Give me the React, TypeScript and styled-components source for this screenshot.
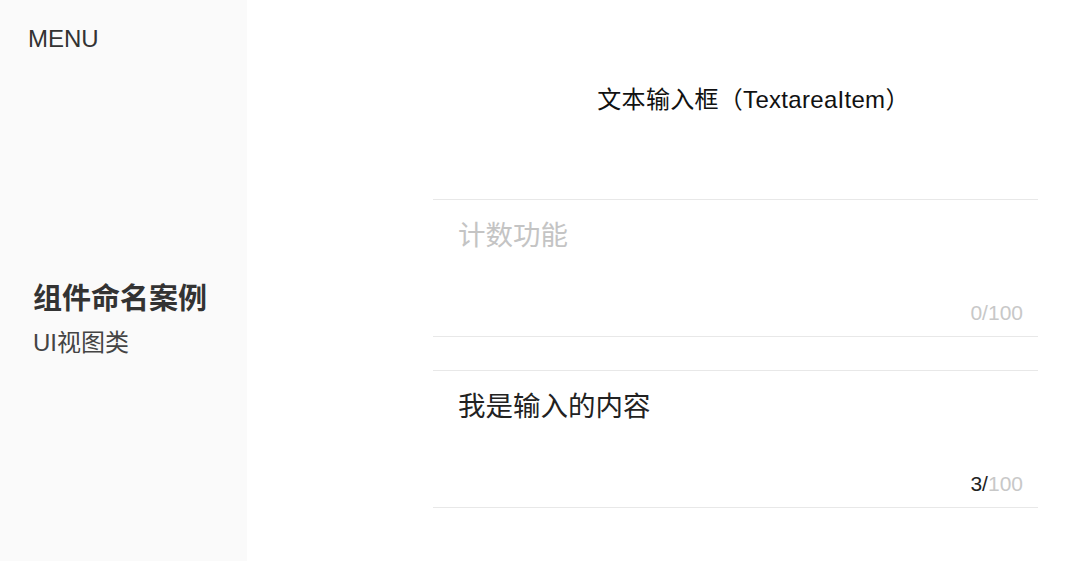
import React from 'react';
import styled, { createGlobalStyle } from 'styled-components';

const GlobalStyle = createGlobalStyle`
  html, body {
    margin: 0;
    padding: 0;
    background: #ffffff;
  }
  body {
    font-family: "Liberation Sans", "Noto Sans CJK SC", sans-serif;
    color: #222;
  }
`;

const Page = styled.div`
  display: flex;
  width: 1080px;
  height: 561px;
  overflow: hidden;
`;

const Sidebar = styled.aside`
  width: 247px;
  flex-shrink: 0;
  background: #fafafa;
  padding: 25px 0 0 28px;
  box-sizing: border-box;
  display: flex;
  flex-direction: column;
`;

const MenuLabel = styled.div`
  font-size: 24px;
  line-height: 28px;
  font-weight: 500;
  color: #333;
`;

const Group = styled.div`
  margin-top: 226px;
  padding-left: 5px;
`;

const GroupTitle = styled.div`
  font-size: 29px;
  line-height: 40px;
  font-weight: 700;
  color: #333;
`;

const GroupSub = styled.div`
  margin-top: 7px;
  font-size: 24px;
  line-height: 34px;
  color: #444;
`;

const Main = styled.main`
  flex: 1;
  padding: 84px 42px 0 186px;
  display: flex;
  flex-direction: column;
`;

const Title = styled.h1`
  margin: 0 0 83px;
  padding-left: 36px;
  text-align: center;
  font-size: 24px;
  line-height: 32px;
  font-weight: 400;
  letter-spacing: 0.3px;
  color: #111;
`;

const List = styled.div`
  display: flex;
  flex-direction: column;
  gap: 33px;
`;

const Item = styled.div`
  height: 138px;
  box-sizing: border-box;
  border-top: 1px solid #e8e8e8;
  border-bottom: 1px solid #e8e8e8;
  padding: 17px 15px 11px 25px;
  display: flex;
  flex-direction: column;
`;

const Area = styled.textarea`
  flex: 1;
  border: none;
  outline: none;
  resize: none;
  padding: 0;
  margin: 0;
  background: transparent;
  font-family: inherit;
  font-size: 27.5px;
  line-height: 38px;
  color: #222;
  overflow: hidden;

  &::placeholder {
    color: #c4c4c4;
  }
`;

const Counter = styled.div`
  align-self: flex-end;
  font-size: 21px;
  line-height: 24px;
  color: #c8c8c8;
`;

const Count = styled.span<{ $filled: boolean }>`
  color: ${(p) => (p.$filled ? '#222' : '#c8c8c8')};
`;

const fields = [
  { placeholder: '计数功能', value: '' },
  { placeholder: '', value: '我是输入的内容' },
];

const App: React.FC = () => (
  <Page>
    <GlobalStyle />
    <Sidebar>
      <MenuLabel>MENU</MenuLabel>
      <Group>
        <GroupTitle>组件命名案例</GroupTitle>
        <GroupSub>UI视图类</GroupSub>
      </Group>
    </Sidebar>
    <Main>
      <Title>文本输入框（TextareaItem）</Title>
      <List>
        {fields.map((f, i) => {
          const n = f.value.length > 0 ? 3 : 0;
          return (
            <Item key={i}>
              <Area readOnly placeholder={f.placeholder} value={f.value} />
              <Counter>
                <Count $filled={n > 0}>{n}/</Count>100
              </Counter>
            </Item>
          );
        })}
      </List>
    </Main>
  </Page>
);

export default App;
